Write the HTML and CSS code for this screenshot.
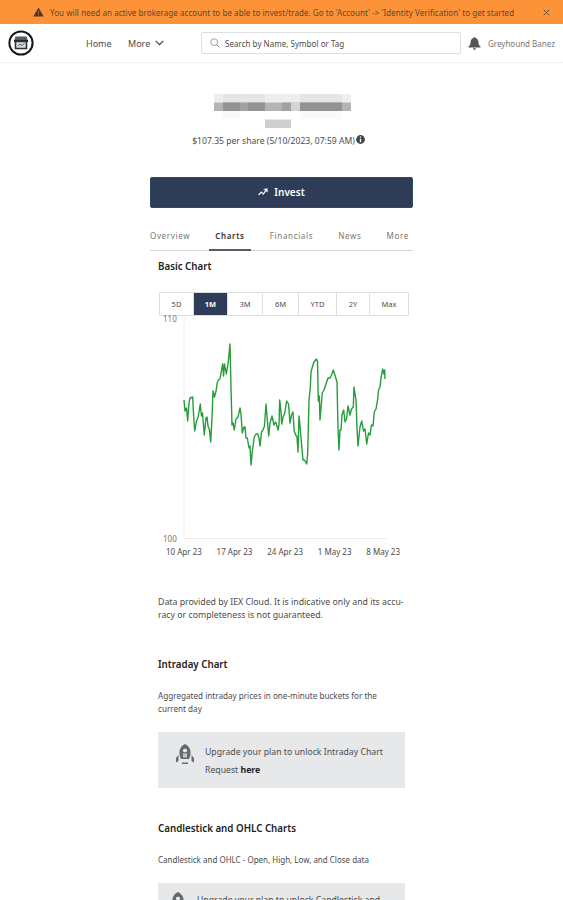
FILE: index.html
```html
<!DOCTYPE html>
<html lang="en">
<head>
    <meta charset="UTF-8">
    <title>Charts | Invest</title>
    <link rel="stylesheet" href="styles.css">
</head>
<body>
    <!-- Account notice -->
    <div class="notice">
        <svg class="notice-icon" width="11" height="10" viewBox="0 0 11 10"><path d="M5.5 .5 10.7 9.5H.3z" fill="#4a3a2c"/><path d="M5.5 3.5v3M5.5 7.5v1" stroke="#b5713a"/></svg>
        <span class="notice-text">You will need an active brokerage account to be able to invest/trade. Go to 'Account' -&gt; 'Identity Verification' to get started</span>
        <svg class="notice-close" width="7" height="7" viewBox="0 0 7 7"><path d="M.7.7 6.3 6.3M6.3.7.7 6.3" stroke="#70502f" stroke-width="1"/></svg>
    </div>

    <header class="header">
        <svg class="logo" width="26" height="26" viewBox="0 0 26 26">
            <circle cx="13" cy="13" r="11.6" fill="#fff" stroke="#141619" stroke-width="2"/>
            <path d="M7.5 6.5h11l1.3 4H6.2z" fill="#555a62"/>
            <path d="M6 10h14v2H6z" fill="#22262c"/>
            <path d="M7.5 11.5h11v7h-11z" fill="#d9dce1" stroke="#2d3138" stroke-width="1.6"/>
            <path d="M10 16l2-2 2 1.500 2.500-2" fill="none" stroke="#555a62"/>
        </svg>
        <nav class="nav">
            <a class="nav-home">Home</a>
            <a class="nav-more">More
                <svg width="9" height="6" viewBox="0 0 9 6"><path d="M.7.8 4.5 4.7 8.3.8" fill="none" stroke="#444" stroke-width="1.2"/></svg>
            </a>
        </nav>
        <div class="search">
            <svg width="10" height="10" viewBox="0 0 10 10"><circle cx="4.2" cy="4.2" r="3.4" fill="none" stroke="#888" stroke-width=".8"/><path d="M6.7 6.7 9.3 9.3" stroke="#777"/></svg>
            <span>Search by Name, Symbol or Tag</span>
        </div>
        <svg class="bell" width="13" height="13" viewBox="0 0 13 13"><path d="M6.5 0c.6 0 .9.4.9 1C9.4 1.5 10.4 3 10.4 5c0 2.500.8 3.500 2.100 4.500V10.500H.5V9.500C1.800 8.500 2.600 7.500 2.600 5c0-2 1-3.500 3-4 0-.6.3-1 .9-1zM5 11.200h3c-.2 1-.7 1.500-1.500 1.500S5.200 12.200 5 11.200z" fill="#555"/></svg>
        <span class="user">Greyhound Banez</span>
    </header>

    <main class="content">
        <!-- Masked company name and ticker -->
        <svg class="masked" width="138" height="36" viewBox="0 0 138 36">
            <path d="M0 0h137v8.500H0z" fill="#eeeeee"/>
            <path d="M9 0h42v8.500H9zM86 0h42v8.500H86z" fill="#e6e6e6"/>
            <path d="M0 8.500h137v8.500H0z" fill="#b4b4b4"/>
            <path d="M9 8.500h17v8.500H9zM34 8.500h17v8.500H34zM86 8.500h42v8.500H86z" fill="#929292"/>
            <path d="M26 8.500h8v8.500h-8zM68 8.500h9v8.500h-9z" fill="#a2a2a2"/>
            <path d="M77 8.500h9v8.500h-9z" fill="#d5d5d5"/>
            <path d="M9 17h17v8H9zM86 17h42v8H86z" fill="#fafafa"/>
            <path d="M51 25.500h26V34H51z" fill="#cfcfcf"/>
        </svg>
        <div class="price">
            <span>$107.35 per share (5/10/2023, 07:59 AM)</span>
            <svg width="9" height="9" viewBox="0 0 9 9"><circle cx="4.5" cy="4.5" r="4.4" fill="#444"/><path d="M4.5 1.5v1.300M4.500 3.700v3.500" stroke="#fff" stroke-width="1.300"/></svg>
        </div>
        <button class="invest">
            <svg width="10" height="8" viewBox="0 0 10 8"><path d="M.6 7 3.3 4l2 2L8.500 1.300M5.600 1.500 8.900.9l.2 3.200" fill="none" stroke="#fff" stroke-width="1.200"/></svg>
            <span>Invest</span>
        </button>

        <div class="tabs">
            <a>Overview</a>
            <a class="active">Charts</a>
            <a>Financials</a>
            <a>News</a>
            <a>More</a>
        </div>

        <section class="panel">
            <h2 class="basic-title">Basic Chart</h2>
            <div class="ranges">
                <span class="w33">5D</span>
                <span class="w34 selected">1M</span>
                <span class="w35">3M</span>
                <span class="w36">6M</span>
                <span class="w38">YTD</span>
                <span class="w33">2Y</span>
                <span class="w39">Max</span>
            </div>
            <div class="chart">
                <div class="y-axis"><span>110</span><span>100</span></div>
                <svg class="plot" width="203" height="222" viewBox="183 317 203 222">
                    <path d="M184 317V538.500H386" fill="none" stroke="#ececec"/>
                    <polyline class="line" points="184,400 185,411 186.500,408 187.700,421 189,403 190,398 192.700,397 193.500,414 194.700,431 196.500,421 198,418 200.300,404 201.500,416 202.500,413 204.300,435 206,418 207,417 208,426 209.500,430 210.700,442 212,418 213,391 214.500,397 216.300,390 217,384 218.300,380 220,379 221,373 222.700,364 223.500,376 224.500,364 226.300,374 228,364 230,344 231,388 232,425 233,423 234.300,430 236,419 238,417 240,408 241,414 242.300,433 244,427 245,427 246,438 247.300,438 249,448 250,446 251,465 252.500,450 254.300,437 256,434 257.700,434 259,438 260,446 261.500,432 263,430 264.500,426 266,404 267.300,419 268.700,436 270,423 272,416 274,425 275.700,422 277,426 278,430 279,425 279.700,400 281,412 281.700,424 283,417 284.500,414 286.700,401 288.500,404 290,423 291.500,415 293,412 294.200,431 295.700,435 297,437 298,452 299,416 300.300,429 301.700,446 303,460 304.500,460 306.700,464 307.700,453 308.500,420 309,400 310.300,388 311,372 313.500,363 316.300,359 317.500,361 318.300,401 319.300,396 320,420 321.300,404 322.300,393 324,390 326,384 328,378 330,378 331.500,375 333.300,370 335.500,377 337,382 338,428 339,450 340,430 341,430 342,415 343.700,410 345,422 346.500,419 348,406 350,415 351.500,409 353.300,407 354,387 356,400 357,428 358,446 360,427 361.700,421 363.500,431 365,429 366.700,444 368.500,433 370,435 371.500,425 373,426 374.300,412 376,409 377.700,399 378.500,390 380,387 381,378 382.700,369 384,374 384.700,370 385,379"/>
                </svg>
            </div>
            <div class="x-axis">
                <span>10 Apr 23</span><span>17 Apr 23</span><span>24 Apr 23</span><span>1 May 23</span><span>8 May 23</span>
            </div>
            <p class="disclaimer">Data provided by IEX Cloud. It is indicative only and its accu-<br>racy or completeness is not guaranteed.</p>
        </section>

        <section class="panel intraday">
            <h2>Intraday Chart</h2>
            <p>Aggregated intraday prices in one-minute buckets for the<br>current day</p>
            <div class="upgrade">
                <svg width="20" height="22" viewBox="0 0 20 22"><path d="M6 16c-1.500-3-2-6-1.300-9C5.200 4.500 7.500 2 10 1c2.500 1 4.800 3.500 5.300 6 .7 3 .2 6-1.300 9z" fill="#666b71"/><path d="M8 9h4v5.500H8z" fill="#c4c7ca"/><circle cx="10" cy="7.500" r="2.600" fill="#e7e8ea" stroke="#50555b"/><path d="M3.500 12 1 15v4.500l2.500-1.500zM16.500 12l2.500 3v4.500L16.500 18zM7 19.500h6v1.500H7z" fill="#666b71"/></svg>
                <div><span>Upgrade your plan to unlock Intraday Chart</span><br><span>Request <b>here</b></span></div>
            </div>
        </section>

        <section class="panel candles">
            <h2>Candlestick and OHLC Charts</h2>
            <p>Candlestick and OHLC - Open, High, Low, and Close data</p>
            <div class="upgrade">
                <svg width="20" height="22" viewBox="0 0 20 22"><path d="M6 16c-1.500-3-2-6-1.300-9C5.200 4.500 7.500 2 10 1c2.500 1 4.800 3.500 5.300 6 .7 3 .2 6-1.300 9z" fill="#666b71"/><circle cx="10" cy="7.500" r="2.600" fill="#e7e8ea" stroke="#50555b"/></svg>
                <div>Upgrade your plan to unlock Candlestick and</div>
            </div>
        </section>
    </main>
</body>
</html>
```
FILE: styles.css
```css
:root {
    --navy: #2e3c58;
    --text: #4c4c4c;
    --border: #dedede;
}

* {
    box-sizing: border-box;
    margin: 0;
    padding: 0;
}

body {
    background: #fff;
    color: var(--text);
    font-family: 'Noto Sans', sans-serif;
    font-size: 8px;
    height: 900px;
    overflow: hidden;
}

svg {
    display: block;
    flex: none;
}

.notice {
    height: 24px;
    background: #fd9338;
    color: #5d452f;
    display: flex;
    align-items: center;
    padding: 0 13px 0 33px;
    white-space: nowrap;
}

.notice-text {
    margin-left: 6px;
    letter-spacing: 0.065px;
}

.notice-close {
    margin-left: auto;
}

.header {
    height: 39px;
    display: flex;
    align-items: center;
    padding-left: 8px;
    border-bottom: 1px solid #f3f3f3;
    box-shadow: 0 1px 2px rgba(0, 0, 0, 0.03);
    white-space: nowrap;
}

.nav {
    display: flex;
    width: 167px;
    padding-left: 52px;
    font-size: 9px;
}

.nav-home {
    width: 42px;
}

.nav-more {
    display: flex;
    align-items: center;
    gap: 5px;
}

.search {
    width: 260px;
    height: 22px;
    border: 1px solid var(--border);
    border-radius: 2px;
    display: flex;
    align-items: center;
    gap: 5px;
    padding-left: 8px;
}

.search span {
    letter-spacing: 0.03px;
}

.bell {
    margin-left: 7px;
}

.user {
    margin-left: 7px;
    color: #777;
}

.content {
    width: 263px;
    margin-left: 150px;
}

.masked {
    margin: 31px 0 0 64px;
}

.price {
    display: flex;
    justify-content: center;
    gap: 1px;
    margin-top: 5px;
    height: 12px;
    line-height: 13px;
    font-size: 8.6px;
    white-space: nowrap;
    padding-right: 6px;
}

.invest {
    width: 263px;
    height: 31px;
    margin-top: 30px;
    padding-bottom: 2px;
    border: 1px solid #344a62;
    border-radius: 2px;
    background: var(--navy);
    color: #fff;
    display: flex;
    align-items: center;
    justify-content: center;
    gap: 6px;
    font: 600 10px 'Noto Sans', sans-serif;
}

.tabs {
    display: flex;
    justify-content: space-between;
    height: 43px;
    padding: 21px 4px 0 0;
    border-bottom: 1px solid #d5d5d5;
    line-height: 14px;
    letter-spacing: 0.65px;
    color: #777;
}

.tabs .active {
    height: 22px;
    padding: 0 6px;
    margin: 0 -6px;
    border-bottom: 2px solid #555b68;
    color: #333;
    font-weight: 600;
}

.panel {
    padding: 0 8px;
}

h2 {
    font-size: 9.75px;
    font-weight: 600;
    line-height: 14px;
    color: #222;
    white-space: nowrap;
}

.basic-title {
    margin-top: 9px;
}

.ranges {
    display: flex;
    width: 250px;
    height: 24px;
    margin: 18px 0 0 1px;
    border: 1px solid var(--border);
    line-height: 22px;
    text-align: center;
    font-size: 7.5px;
}

.ranges span + span {
    border-left: 1px solid var(--border);
}

.ranges .selected {
    background: var(--navy);
    color: #fff;
    font-weight: 700;
}

.w33 { width: 33px; }
.w34 { width: 34px; }
.w35 { width: 35px; }
.w36 { width: 36px; }
.w38 { width: 38px; }
.w39 { width: 39px; }

.chart {
    display: flex;
    height: 222px;
    margin-top: 1px;
}

.y-axis {
    width: 25px;
    display: flex;
    flex-direction: column;
    justify-content: space-between;
    margin: -4px 0 -6px;
    padding-left: 5px;
    line-height: 12px;
    color: #777;
}

.line {
    fill: none;
    stroke: #259d3b;
    stroke-width: 1.4;
    stroke-linejoin: round;
}

.x-axis {
    display: flex;
    justify-content: space-between;
    width: 234px;
    margin: 7px 0 0 8px;
    line-height: 12px;
    white-space: nowrap;
}

p {
    line-height: 13px;
    white-space: nowrap;
}

.disclaimer {
    margin-top: 38px;
    font-size: 8.75px;
}

.intraday {
    margin-top: 36px;
}

.intraday p {
    margin-top: 17px;
    font-size: 8.15px;
}

.upgrade {
    display: flex;
    height: 56px;
    margin-top: 17px;
    padding: 11px 0 0 17px;
    background: #e7e8ea;
    line-height: 18px;
    font-size: 8.7px;
    white-space: nowrap;
}

.upgrade div {
    margin: 0 0 0 10px;
}

.upgrade b {
    color: #222;
}

.candles {
    margin-top: 34px;
}

.candles p {
    margin-top: 17px;
}

.candles .upgrade {
    padding: 8px 0 0 10px;
}

.candles .upgrade div {
    margin-left: 9px;
}
```
